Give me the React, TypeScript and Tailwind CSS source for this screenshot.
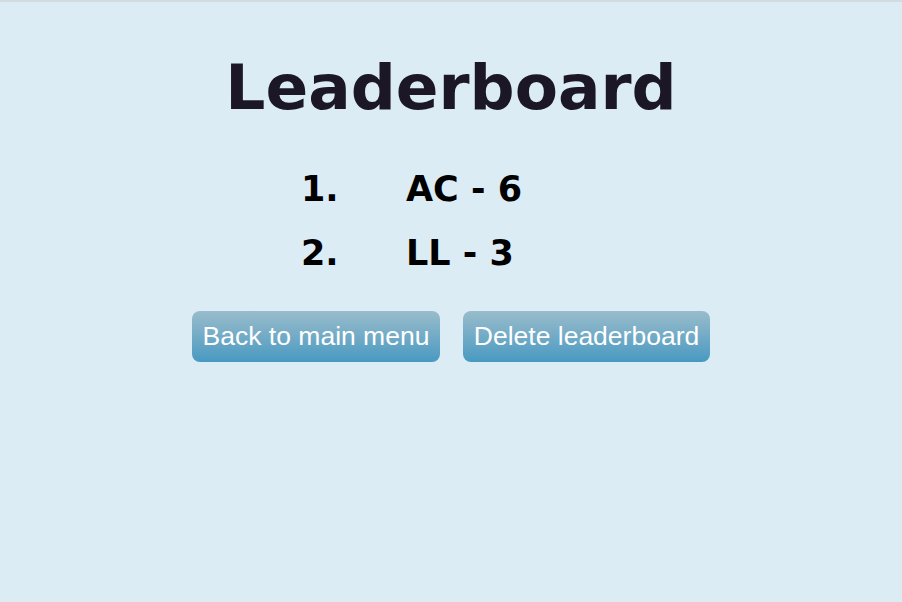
export default function App() {
  const rows = [
    { rank: "1.", name: "AC", score: 6 },
    { rank: "2.", name: "LL", score: 3 },
  ]

  return (
    <div className="min-h-[602px] bg-[#dbecf5] border-t-2 border-[#d3dbe0]">
      <div className="pt-[44px] text-center">
        <h1 className="text-[63px] leading-[84px] font-bold text-[#1b1727] font-['DejaVu_Sans',Verdana,sans-serif]">
          Leaderboard
        </h1>
      </div>

      {/* Scores */}
      <div className="mx-auto w-[300px] mt-[27px] font-['DejaVu_Sans',Verdana,sans-serif] font-bold text-[35px] text-black">
        {rows.map((r) => (
          <div key={r.rank} className="grid grid-cols-[105px_1fr] h-[64px] items-center">
            <span>{r.rank}</span>
            <span>
              {r.name} - {r.score}
            </span>
          </div>
        ))}
      </div>

      <div className="flex justify-center gap-[23px] mt-[26px] font-['Liberation_Sans',Arial,sans-serif]">
        <button className="w-[248px] h-[51px] rounded-[8px] bg-gradient-to-b from-[#98bccb] to-[#4799c1] text-white text-[26.5px]">
          Back to main menu
        </button>
        <button className="w-[247px] h-[51px] rounded-[8px] bg-gradient-to-b from-[#98bccb] to-[#4799c1] text-white text-[26.5px]">
          Delete leaderboard
        </button>
      </div>
    </div>
  )
}
